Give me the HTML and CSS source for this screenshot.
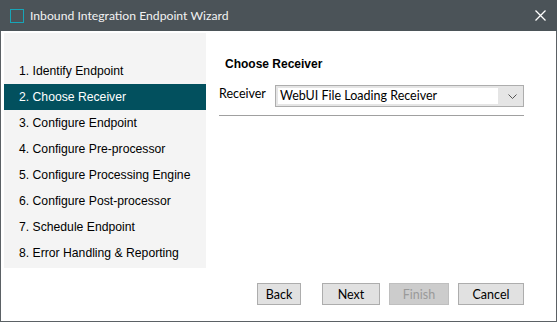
FILE: index.html
```html
<!DOCTYPE html>
<html>
<head>
<meta charset="utf-8">
<link rel="stylesheet" href="styles.css">
</head>
<body>
<div class="window">
  <div class="titlebar">
    <span class="app-icon"></span>
    <span class="title">Inbound Integration Endpoint Wizard</span>
    <svg class="close" width="11" height="11" viewBox="0 0 11 11"><path d="M0.5 0.5 L10.5 10.5 M10.5 0.5 L0.5 10.5" stroke="#ffffff" stroke-width="1.3" fill="none"/></svg>
  </div>
  <div class="body">
    <div class="main">
      <ul class="steps">
        <li class="step">1. Identify Endpoint</li>
        <li class="step active">2. Choose Receiver</li>
        <li class="step">3. Configure Endpoint</li>
        <li class="step">4. Configure Pre-processor</li>
        <li class="step">5. Configure Processing Engine</li>
        <li class="step">6. Configure Post-processor</li>
        <li class="step">7. Schedule Endpoint</li>
        <li class="step">8. Error Handling &amp; Reporting</li>
      </ul>
      <div class="panel">
        <div class="heading">Choose Receiver</div>
        <div class="field">
          <span class="label">Receiver</span>
          <div class="combo">
            <span class="combo-text">WebUI File Loading Receiver</span>
            <svg class="arrow" width="9" height="5" viewBox="0 0 9 5"><path d="M0.5 0.5 L4.5 4.5 L8.5 0.5" stroke="#555" stroke-width="1" fill="none"/></svg>
          </div>
        </div>
      </div>
    </div>
    <div class="buttons">
      <button class="btn btn-back">Back</button>
      <button class="btn btn-next">Next</button>
      <button class="btn btn-finish" disabled>Finish</button>
      <button class="btn btn-cancel">Cancel</button>
    </div>
  </div>
</div>
</body>
</html>
```
FILE: styles.css
```css
* { box-sizing: border-box; }
html, body { margin: 0; padding: 0; background: #ffffff; }
.window {
  width: 557px;
  height: 322px;
  border: 1px solid #5b6165;
  border-top: none;
  display: flex;
  flex-direction: column;
  background: #ffffff;
}
.titlebar {
  height: 31px;
  background: #4b5358;
  margin: 0 -1px;
  display: flex;
  align-items: center;
  padding-left: 10px;
  padding-right: 10px;
  font-family: Lato, "Noto Sans", sans-serif;
  font-size: 12.2px;
  color: #f2f2f2;
}
.app-icon {
  width: 14px;
  height: 14px;
  border: 1.5px solid #17a5b8;
  margin-right: 6px;
  margin-top: 1px;
}
.title { flex: 1; }
.close { margin-right: 1px; }
.body {
  flex: 1;
  display: flex;
  flex-direction: column;
}
.main {
  display: flex;
  padding: 2px 0 0 3px;
}
.steps {
  list-style: none;
  margin: 0;
  padding: 25px 0 0 0;
  width: 202px;
  height: 235px;
  background: #f4f4f4;
  font-family: "Liberation Sans", Arial, sans-serif;
  font-size: 12.2px;
  color: #000000;
}
.step {
  height: 26px;
  line-height: 26px;
  padding-left: 15px;
}
.step.active {
  background: #02505e;
  color: #ffffff;
}
.panel {
  flex: 1;
  padding: 22px 0 0 13px;
  font-family: Lato, "Noto Sans", sans-serif;
}
.heading {
  font-family: "Liberation Sans", Arial, sans-serif;
  font-weight: bold;
  font-size: 12px;
  padding-left: 6px;
  height: 18px;
  line-height: 18px;
}
.field {
  display: flex;
  align-items: flex-start;
  margin-top: 12px;
  width: 305px;
  padding-bottom: 8px;
  border-bottom: 1px solid #a0a0a0;
}
.label {
  font-size: 12.5px;
  line-height: 18px;
  width: 56px;
}
.combo {
  width: 249px;
  height: 22px;
  border: 1px solid #adadad;
  background: #e5e5e5;
  display: flex;
  align-items: center;
  padding: 2px;
}
.combo-text {
  flex: 1;
  height: 16px;
  background: #ffffff;
  font-size: 12.5px;
  line-height: 16px;
  padding-left: 2px;
  margin-right: 10px;
  color: #000;
}
.arrow { margin-right: 4px; }
.buttons {
  margin-top: auto;
  display: flex;
  padding: 0 0 16px 256px;
}
.btn {
  height: 22px;
  border: 1px solid #adadad;
  background: #e1e1e1;
  font-family: Lato, "Noto Sans", sans-serif;
  font-size: 12.5px;
  color: #000;
  padding: 0;
  margin: 0;
}
.btn-back { width: 44px; }
.btn-next { width: 58px; margin-left: 21px; }
.btn-finish { width: 60px; margin-left: 9px; background: #cccccc; border-color: #bfbfbf; color: #9a9a9a; }
.btn-cancel { width: 66px; margin-left: 9px; }
```
